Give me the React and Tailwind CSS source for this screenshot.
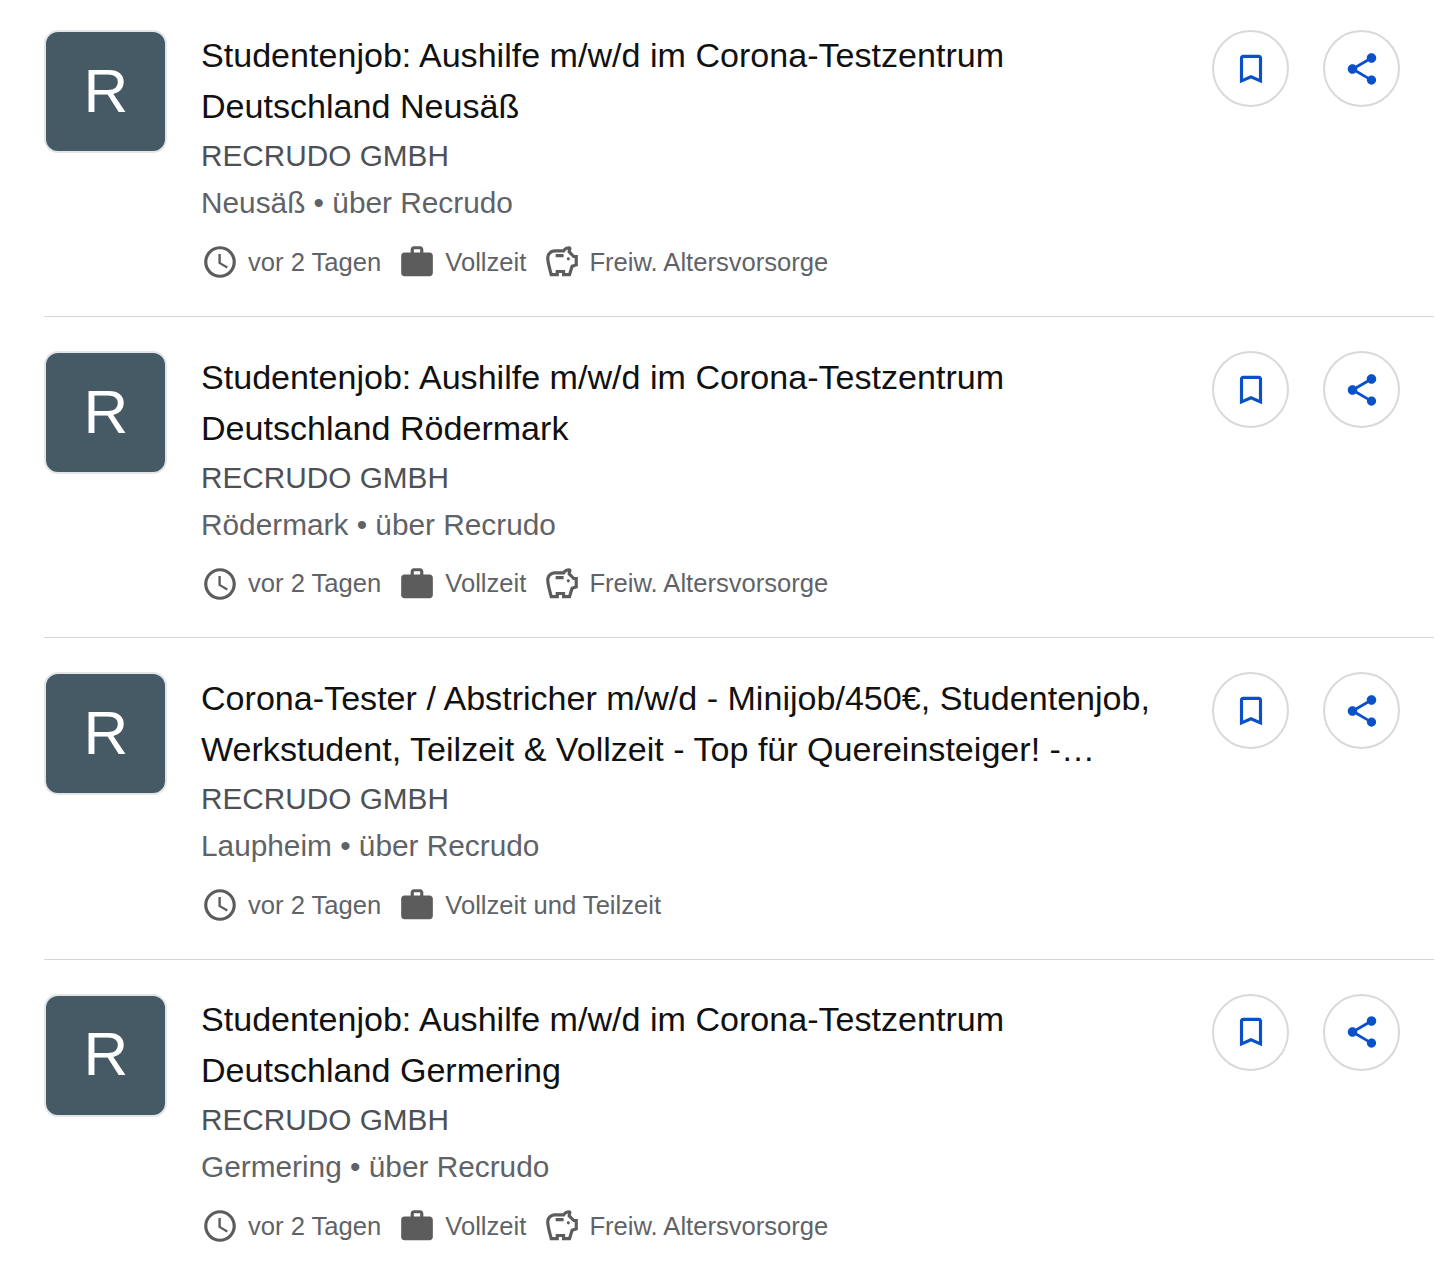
import React from 'react';
import { MdOutlineSavings, MdWork, MdBookmarkBorder, MdShare, MdAccessTime } from 'react-icons/md';

const jobs = [
  { title: ['Studentenjob: Aushilfe m/w/d im Corona-Testzentrum', 'Deutschland Neusäß'], place: 'Neusäß', hours: 'Vollzeit', perk: true },
  { title: ['Studentenjob: Aushilfe m/w/d im Corona-Testzentrum', 'Deutschland Rödermark'], place: 'Rödermark', hours: 'Vollzeit', perk: true },
  { title: ['Corona-Tester / Abstricher m/w/d - Minijob/450€, Studentenjob,', 'Werkstudent, Teilzeit & Vollzeit - Top für Quereinsteiger! -…'], place: 'Laupheim', hours: 'Vollzeit und Teilzeit', perk: false },
  { title: ['Studentenjob: Aushilfe m/w/d im Corona-Testzentrum', 'Deutschland Germering'], place: 'Germering', hours: 'Vollzeit', perk: true },
];

function RoundButton({ children }) {
  return (
    <button className="w-[77px] h-[77px] rounded-full border-2 border-[#d9d9d9] bg-white flex items-center justify-center text-[#0a50c8]">
      {children}
    </button>
  );
}

function JobRow({ job, first, last }) {
  return (
    <div className={`flex ml-[44px] w-[1390px] ${first ? 'pt-[30px] h-[317px]' : 'pt-[34px] h-[321.33px]'} ${last ? '' : 'border-b border-[#d6d6d6]'}`}>
      {/* Company logo */}
      <div className="w-[123px] h-[123px] shrink-0 rounded-[14px] border-2 border-[#e3e6e9] bg-[#455a64] flex items-center justify-center pb-[2px] pl-[1px] text-white text-[62px] leading-none">
        R
      </div>

      <div className={`ml-[34px] flex-1 ${first ? '' : 'pt-[0.5px]'}`}>
        <div className="text-[34.08px] leading-[51px] text-[#111111] whitespace-nowrap">
          <div>{job.title[0]}</div>
          <div>{job.title[1]}</div>
        </div>
        <div className="text-[29.75px] leading-[48px] text-[#4d5156]">RECRUDO GMBH</div>
        <div className="text-[29.8px] leading-[46px] text-[#5f6368]">{job.place} • über Recrudo</div>

        {/* Meta line */}
        <div className="mt-[12px] flex items-center h-[48px] text-[25.6px] text-[#5f6368]">
          <MdAccessTime size={38} className="text-[#5c5c5c]" />
          <span className="ml-[9px]">vor 2 Tagen</span>
          <MdWork size={38} className="ml-[17px] text-[#5c5c5c]" />
          <span className="ml-[9px]">{job.hours}</span>
          {job.perk && (
            <>
              <MdOutlineSavings size={38} className="ml-[17px] text-[#5c5c5c]" />
              <span className="ml-[8px]">Freiw. Altersvorsorge</span>
            </>
          )}
        </div>
      </div>

      <div className="flex gap-[34px] mr-[34px] shrink-0">
        <RoundButton><MdBookmarkBorder size={38} /></RoundButton>
        <RoundButton><MdShare size={38} /></RoundButton>
      </div>
    </div>
  );
}

export default function App() {
  return (
    <div className="w-[1456px] h-[1272px] bg-white overflow-hidden font-['Liberation_Sans',Arial,sans-serif]">
      {jobs.map((job, i) => (
        <JobRow key={i} job={job} first={i === 0} last={i === jobs.length - 1} />
      ))}
    </div>
  );
}
